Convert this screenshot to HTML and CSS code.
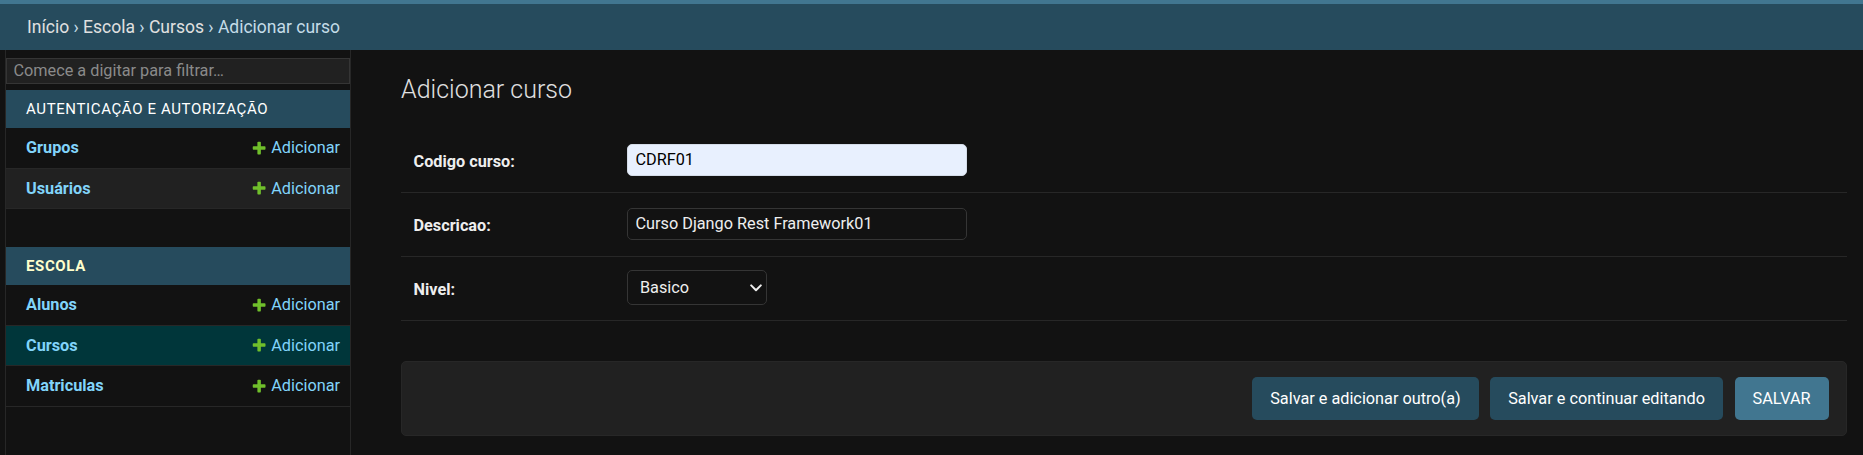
FILE: index.html
```html
<!DOCTYPE html>
<html lang="pt-br">
<head>
<meta charset="utf-8">
<title>Adicionar curso</title>
<link rel="stylesheet" href="styles.css">
</head>
<body>
<div class="header-strip"></div>
<nav class="breadcrumbs">
  <a href="#">Início</a> › <a href="#">Escola</a> › <a href="#">Cursos</a> › Adicionar curso
</nav>
<div class="main">
  <div class="toggle"></div>
  <aside class="sidebar">
    <input class="nav-filter" type="search" placeholder="Comece a digitar para filtrar…">
    <div class="module">
      <div class="caption">Autenticação e Autorização</div>
      <div class="app-row">
        <a class="model" href="#">Grupos</a>
        <a class="addlink" href="#"><svg class="plus" viewBox="0 0 1792 1792"><path fill="#70bf2b" d="M1600 796v192q0 40-28 68t-68 28h-416v416q0 40-28 68t-68 28h-192q-40 0-68-28t-28-68v-416h-416q-40 0-68-28t-28-68v-192q0-40 28-68t68-28h416v-416q0-40 28-68t68-28h192q40 0 68 28t28 68v416h416q40 0 68 28t28 68z"/></svg>Adicionar</a>
      </div>
      <div class="app-row even">
        <a class="model" href="#">Usuários</a>
        <a class="addlink" href="#"><svg class="plus" viewBox="0 0 1792 1792"><path fill="#70bf2b" d="M1600 796v192q0 40-28 68t-68 28h-416v416q0 40-28 68t-68 28h-192q-40 0-68-28t-28-68v-416h-416q-40 0-68-28t-28-68v-192q0-40 28-68t68-28h416v-416q0-40 28-68t68-28h192q40 0 68 28t28 68v416h416q40 0 68 28t28 68z"/></svg>Adicionar</a>
      </div>
    </div>
    <div class="module">
      <div class="caption current">Escola</div>
      <div class="app-row">
        <a class="model" href="#">Alunos</a>
        <a class="addlink" href="#"><svg class="plus" viewBox="0 0 1792 1792"><path fill="#70bf2b" d="M1600 796v192q0 40-28 68t-68 28h-416v416q0 40-28 68t-68 28h-192q-40 0-68-28t-28-68v-416h-416q-40 0-68-28t-28-68v-192q0-40 28-68t68-28h416v-416q0-40 28-68t68-28h192q40 0 68 28t28 68v416h416q40 0 68 28t28 68z"/></svg>Adicionar</a>
      </div>
      <div class="app-row selected">
        <a class="model" href="#">Cursos</a>
        <a class="addlink" href="#"><svg class="plus" viewBox="0 0 1792 1792"><path fill="#70bf2b" d="M1600 796v192q0 40-28 68t-68 28h-416v416q0 40-28 68t-68 28h-192q-40 0-68-28t-28-68v-416h-416q-40 0-68-28t-28-68v-192q0-40 28-68t68-28h416v-416q0-40 28-68t68-28h192q40 0 68 28t28 68v416h416q40 0 68 28t28 68z"/></svg>Adicionar</a>
      </div>
      <div class="app-row">
        <a class="model" href="#">Matriculas</a>
        <a class="addlink" href="#"><svg class="plus" viewBox="0 0 1792 1792"><path fill="#70bf2b" d="M1600 796v192q0 40-28 68t-68 28h-416v416q0 40-28 68t-68 28h-192q-40 0-68-28t-28-68v-416h-416q-40 0-68-28t-28-68v-192q0-40 28-68t68-28h416v-416q0-40 28-68t68-28h192q40 0 68 28t28 68v416h416q40 0 68 28t28 68z"/></svg>Adicionar</a>
      </div>
    </div>
  </aside>
  <main class="content">
    <h1>Adicionar curso</h1>
    <form>
      <fieldset class="fields">
        <div class="form-row">
          <label for="codigo">Codigo curso:</label>
          <input id="codigo" class="text-input autofill" type="text" value="CDRF01">
        </div>
        <div class="form-row">
          <label for="descricao">Descricao:</label>
          <input id="descricao" class="text-input" type="text" value="Curso Django Rest Framework01">
        </div>
        <div class="form-row">
          <label for="nivel">Nivel:</label>
          <span class="select-wrap">
            <select id="nivel" class="select">
              <option>Basico</option>
              <option>Intermediario</option>
              <option>Avancado</option>
            </select>
            <svg class="chevron" viewBox="0 0 12 8" width="12" height="8"><path d="M1.2 1.4 6 6.2l4.8-4.8" fill="none" stroke="#eeeeee" stroke-width="2" stroke-linecap="round" stroke-linejoin="round"/></svg>
          </span>
        </div>
      </fieldset>
      <div class="submit-row">
        <button type="button" class="btn">Salvar e adicionar outro(a)</button>
        <button type="button" class="btn">Salvar e continuar editando</button>
        <button type="button" class="btn default">Salvar</button>
      </div>
    </form>
  </main>
</div>
</body>
</html>
```

FILE: styles.css
```css
* {
  box-sizing: border-box;
}

html,
body {
  margin: 0;
  height: 100%;
}

body {
  background: #121212;
  color: #eeeeee;
  font-family: Roboto, "Noto Sans", "Liberation Sans", sans-serif;
  overflow: hidden;
}

a {
  text-decoration: none;
}

.header-strip {
  height: 4px;
  background: #417690;
}

.breadcrumbs {
  height: 46px;
  padding: 12.5px 27px;
  background: #264b5d;
  color: #c4dce8;
  font-size: 17.5px;
  line-height: 21px;
  white-space: nowrap;
}

.breadcrumbs a {
  color: #e0e0e0;
}

.main {
  display: flex;
  height: calc(100% - 50px);
}

.toggle {
  flex: 0 0 6px;
  border-right: 1px solid #272727;
  background: #121212;
}

.sidebar {
  flex: 0 0 345px;
  border-right: 1px solid #272727;
  padding-top: 1px;
  background: #121212;
}

.nav-filter {
  display: block;
  width: 100%;
  height: 26px;
  margin: 6.5px 0;
  padding: 0 6.5px;
  border: 1px solid #353535;
  border-radius: 0;
  background: #212121;
  color: #eeeeee;
  font-family: inherit;
  font-size: 16.25px;
  outline: none;
  -webkit-appearance: none;
  appearance: none;
}

.nav-filter::placeholder {
  color: #8a8a8a;
}

.module {
  margin-bottom: 37.5px;
}

.caption {
  height: 38px;
  padding: 10px 20px;
  background: #264b5d;
  color: #ffffff;
  font-size: 15px;
  line-height: 18px;
  letter-spacing: 0.625px;
  text-transform: uppercase;
}

.caption.current {
  color: #ffffcc;
  font-weight: bold;
}

.app-row {
  display: flex;
  align-items: center;
  justify-content: space-between;
  height: 40.7px;
  padding: 0 10px 0 20px;
  border-bottom: 1px solid #272727;
  font-size: 16.25px;
  line-height: 19.7px;
  background: #121212;
}

.app-row.even {
  background: #212121;
}

.app-row.selected {
  background: #00363a;
}

.model {
  color: #81d4fa;
  font-weight: bold;
}

.addlink {
  display: flex;
  align-items: center;
  color: #81d4fa;
}

.plus {
  width: 16.25px;
  height: 16.25px;
  margin-right: 3.75px;
}

.content {
  flex: 1;
  padding: 25px 16px 0 50px;
}

h1 {
  margin: 0 0 25px;
  font-size: 25px;
  line-height: 29.3px;
  font-weight: 300;
  color: #e0e0e0;
}

.fields {
  margin: 0;
  padding: 0;
  border: none;
  min-width: 0;
}

.form-row {
  display: flex;
  align-items: flex-start;
  height: 64px;
  padding: 12.5px;
  border-bottom: 1px solid #272727;
}

.form-row label {
  flex: 0 0 213.5px;
  padding-top: 12px;
  font-size: 16.25px;
  line-height: 1;
  font-weight: bold;
  color: #eeeeee;
}

.text-input {
  width: 340px;
  height: 32px;
  margin: 2px 0;
  padding: 0 7.5px;
  border: 1px solid #353535;
  border-radius: 5px;
  background: #121212;
  color: #eeeeee;
  font-family: inherit;
  font-size: 16.25px;
  outline: none;
}

.text-input.autofill {
  background: #e8f0fe;
  border-color: #d4dce8;
  color: #000000;
}

.select-wrap {
  position: relative;
  display: inline-block;
}

.select {
  display: block;
  width: 140px;
  height: 35.5px;
  padding: 0 24px 0 12px;
  border: 1px solid #353535;
  border-radius: 5px;
  background: #121212;
  color: #eeeeee;
  font-family: inherit;
  font-size: 16.25px;
  outline: none;
  -webkit-appearance: none;
  appearance: none;
}

.chevron {
  position: absolute;
  left: 123px;
  top: 14px;
  pointer-events: none;
}

.submit-row {
  display: flex;
  justify-content: flex-end;
  gap: 11.5px;
  height: 75px;
  margin-top: 39.5px;
  padding: 15px 17.5px;
  border: 1px solid #272727;
  border-radius: 5px;
  background: #212121;
}

.btn {
  height: 43px;
  padding: 0 18px;
  border: none;
  border-radius: 5px;
  background: #264b5d;
  color: #ffffff;
  font-family: inherit;
  font-size: 16.25px;
  cursor: pointer;
}

.btn.default {
  background: #417690;
  text-transform: uppercase;
}
```
